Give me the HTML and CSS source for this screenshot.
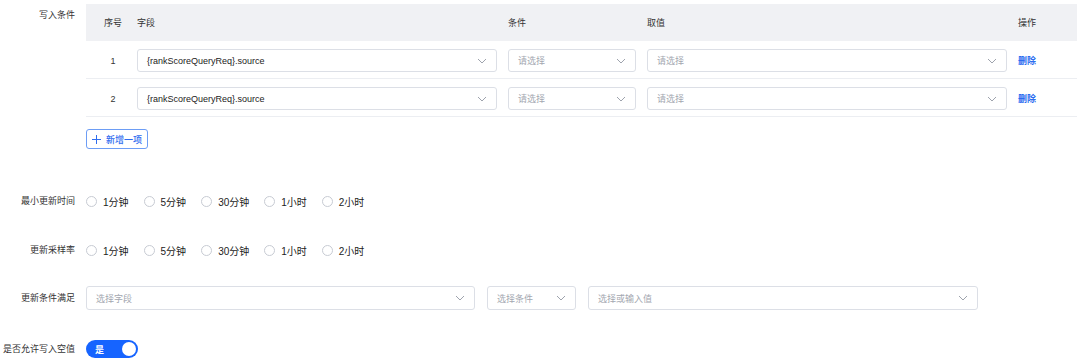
FILE: index.html
```html
<!DOCTYPE html>
<html lang="zh-CN">
<head>
    <meta charset="UTF-8">
    <title>写入配置</title>
    <link rel="stylesheet" href="styles.css">
</head>
<body>
    <div class="form">
        <div class="form-row row-table">
            <label class="form-label">写入条件</label>
            <div class="form-content">
                <div class="cond-table">
                    <div class="cond-head">
                        <div class="cell cell-no">序号</div>
                        <div class="cell">字段</div>
                        <div class="cell">条件</div>
                        <div class="cell">取值</div>
                        <div class="cell">操作</div>
                    </div>
                    <div class="cond-row">
                        <div class="cell cell-no">1</div>
                        <div class="cell">
                            <div class="select"><span class="select-value">{rankScoreQueryReq}.source</span><svg class="arrow" viewBox="0 0 10 6"><path d="M1 1l4 4 4-4"/></svg></div>
                        </div>
                        <div class="cell">
                            <div class="select"><span class="placeholder">请选择</span><svg class="arrow" viewBox="0 0 10 6"><path d="M1 1l4 4 4-4"/></svg></div>
                        </div>
                        <div class="cell">
                            <div class="select"><span class="placeholder">请选择</span><svg class="arrow" viewBox="0 0 10 6"><path d="M1 1l4 4 4-4"/></svg></div>
                        </div>
                        <div class="cell"><a class="link">删除</a></div>
                    </div>
                    <div class="cond-row">
                        <div class="cell cell-no">2</div>
                        <div class="cell">
                            <div class="select"><span class="select-value">{rankScoreQueryReq}.source</span><svg class="arrow" viewBox="0 0 10 6"><path d="M1 1l4 4 4-4"/></svg></div>
                        </div>
                        <div class="cell">
                            <div class="select"><span class="placeholder">请选择</span><svg class="arrow" viewBox="0 0 10 6"><path d="M1 1l4 4 4-4"/></svg></div>
                        </div>
                        <div class="cell">
                            <div class="select"><span class="placeholder">请选择</span><svg class="arrow" viewBox="0 0 10 6"><path d="M1 1l4 4 4-4"/></svg></div>
                        </div>
                        <div class="cell"><a class="link">删除</a></div>
                    </div>
                </div>
                <button class="add-button">
                    <svg class="plus" viewBox="0 0 10 10"><path d="M5 0v10M0 5h10"/></svg>
                    新增一项
                </button>
            </div>
        </div>

        <div class="form-row row-radio-first">
            <label class="form-label">最小更新时间</label>
            <div class="form-content radio-group">
                <span class="radio"><i></i>1分钟</span>
                <span class="radio"><i></i>5分钟</span>
                <span class="radio"><i></i>30分钟</span>
                <span class="radio"><i></i>1小时</span>
                <span class="radio"><i></i>2小时</span>
            </div>
        </div>

        <div class="form-row row-radio-second">
            <label class="form-label">更新采样率</label>
            <div class="form-content radio-group">
                <span class="radio"><i></i>1分钟</span>
                <span class="radio"><i></i>5分钟</span>
                <span class="radio"><i></i>30分钟</span>
                <span class="radio"><i></i>1小时</span>
                <span class="radio"><i></i>2小时</span>
            </div>
        </div>

        <div class="form-row row-selects">
            <label class="form-label">更新条件满足</label>
            <div class="form-content select-group">
                <div class="select select-field"><span class="placeholder">选择字段</span><svg class="arrow" viewBox="0 0 10 6"><path d="M1 1l4 4 4-4"/></svg></div>
                <div class="select select-cond"><span class="placeholder">选择条件</span><svg class="arrow" viewBox="0 0 10 6"><path d="M1 1l4 4 4-4"/></svg></div>
                <div class="select select-value-box"><span class="placeholder">选择或输入值</span><svg class="arrow" viewBox="0 0 10 6"><path d="M1 1l4 4 4-4"/></svg></div>
            </div>
        </div>

        <div class="form-row row-switch">
            <label class="form-label">是否允许写入空值</label>
            <div class="form-content">
                <span class="switch"><span class="switch-text">是</span><span class="switch-knob"></span></span>
            </div>
        </div>
    </div>
</body>
</html>
```

FILE: styles.css
```css
body {
    margin: 0;
    background: #fff;
    color: #333;
    font-family: "Liberation Sans", "Noto Sans CJK SC", sans-serif;
    font-size: 9px;
}

.form {
    width: 1080px;
    padding: 4px 3px 0 0;
    box-sizing: border-box;
}

.form-row {
    display: flex;
    align-items: center;
    gap: 11px;
}

.form-label {
    width: 75px;
    flex-shrink: 0;
    text-align: right;
    color: #333;
    line-height: 14px;
}

.form-content {
    flex: 1;
}

/* 写入条件 表格 */
.row-table {
    align-items: flex-start;
}

.row-table .form-label {
    padding-top: 4px;
}

.cond-head,
.cond-row {
    display: grid;
    grid-template-columns: 51px 371px 139px 371px 1fr;
    align-items: center;
}

.cond-head {
    height: 37px;
    background: #f0f1f4;
    color: #333;
}

.cond-row {
    height: 35px;
    padding-top: 2px;
    border-bottom: 1px solid #eceef2;
}

.cell-no {
    text-align: center;
    padding-left: 3px;
}

.cond-row .select {
    width: calc(100% - 11px);
}

.select {
    height: 23px;
    box-sizing: border-box;
    border: 1px solid #dcdfe6;
    border-radius: 3px;
    display: flex;
    align-items: center;
    justify-content: space-between;
    padding: 0 9px 0 9px;
    background: #fff;
}

.select-value {
    color: #222;
}

.placeholder {
    color: #a3a7b0;
}

.arrow {
    width: 10px;
    height: 6px;
    fill: none;
    stroke: #9ea3ad;
    stroke-width: 1;
}

.link {
    color: #2b6cf0;
    font-weight: 600;
    cursor: pointer;
}

.add-button {
    margin-top: 12px;
    height: 20px;
    width: 62px;
    padding: 0 0 0 5px;
    display: flex;
    align-items: center;
    gap: 5px;
    border: 1px solid #6d9df5;
    border-radius: 3px;
    background: #fff;
    color: #2d6bef;
    font-family: inherit;
    font-size: 9px;
    font-weight: 500;
    cursor: pointer;
}

.plus {
    width: 9px;
    height: 9px;
    stroke: #2d6bef;
    stroke-width: 1.1;
}

/* 单选 */
.row-radio-first {
    margin-top: 42px;
    height: 20px;
}

.row-radio-second {
    margin-top: 29px;
    height: 20px;
}

.radio-group {
    display: flex;
    align-items: center;
}

.radio {
    display: flex;
    align-items: center;
    gap: 6px;
    margin-right: 15px;
    font-size: 10px;
    color: #222;
}

.radio i {
    width: 11px;
    height: 11px;
    box-sizing: border-box;
    border: 1px solid #c7cbd3;
    border-radius: 50%;
}

/* 更新条件 */
.row-selects {
    margin-top: 26px;
}

.select-group {
    display: flex;
    gap: 12px;
}

.select-group .select {
    height: 24px;
}

.select-field {
    width: 389px;
}

.select-cond {
    width: 89px;
}

.select-value-box {
    width: 390px;
}

/* 开关 */
.row-switch {
    margin-top: 30px;
}

.switch {
    width: 52px;
    height: 18px;
    border-radius: 9px;
    background: #1664ff;
    display: flex;
    align-items: center;
    justify-content: space-between;
    padding: 0 2px 0 9px;
    box-sizing: border-box;
}

.switch-text {
    color: #fff;
    font-weight: 600;
    font-size: 9px;
}

.switch-knob {
    width: 14px;
    height: 14px;
    border-radius: 50%;
    background: #fff;
}
```
